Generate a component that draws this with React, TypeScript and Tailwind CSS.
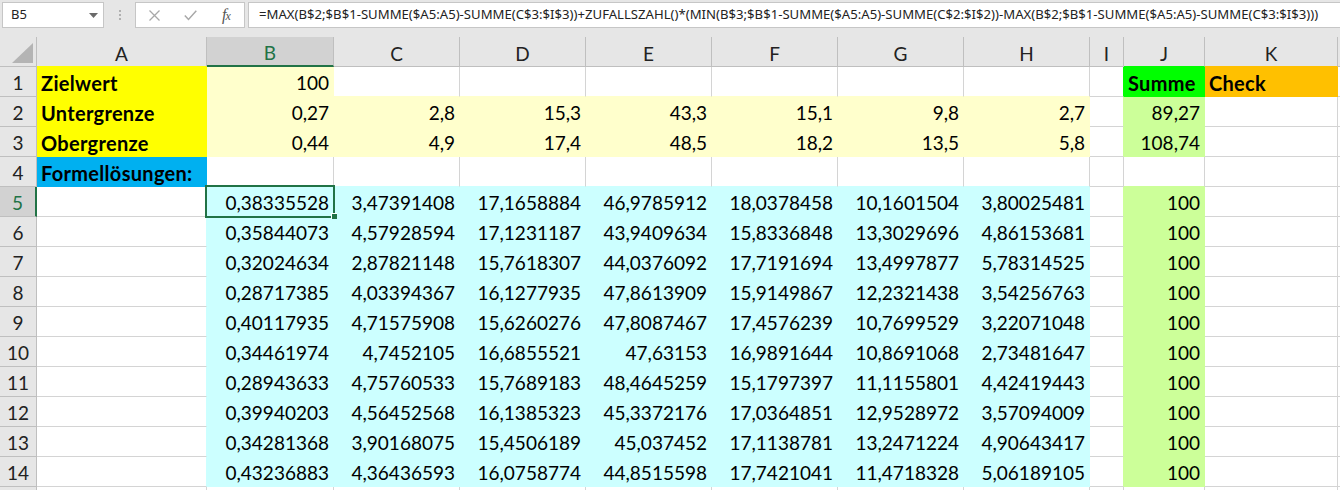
import React from 'react';

type Fill = '' | 'Y' | 'B' | 'LY' | 'C' | 'G' | 'O' | 'LG';

const BG: Record<Fill, string> = {
  '': 'bg-white',
  Y: 'bg-[#ffff00]',
  B: 'bg-[#00b0f0]',
  LY: 'bg-[#ffffcc]',
  C: 'bg-[#ccffff]',
  G: 'bg-[#00ff00]',
  O: 'bg-[#ffc000]',
  LG: 'bg-[#ccff99]',
};
const BR: Record<Fill, string> = {
  '': 'border-r-[#d4d4d4]',
  Y: 'border-r-[#ffff00]',
  B: 'border-r-[#00b0f0]',
  LY: 'border-r-[#ffffcc]',
  C: 'border-r-[#ccffff]',
  G: 'border-r-[#00ff00]',
  O: 'border-r-[#ffc000]',
  LG: 'border-r-[#ccff99]',
};
const BB: Record<Fill, string> = {
  '': 'border-b-[#d4d4d4]',
  Y: 'border-b-[#ffff00]',
  B: 'border-b-[#00b0f0]',
  LY: 'border-b-[#ffffcc]',
  C: 'border-b-[#ccffff]',
  G: 'border-b-[#00ff00]',
  O: 'border-b-[#ffc000]',
  LG: 'border-b-[#ccff99]',
};
const HB: Record<Fill, string> = {
  '': 'border-b-[#bfbfbf]',
  Y: 'border-b-[#ffff00]',
  B: 'border-b-[#00b0f0]',
  LY: 'border-b-[#ffffcc]',
  C: 'border-b-[#ccffff]',
  G: 'border-b-[#00ff00]',
  O: 'border-b-[#ffc000]',
  LG: 'border-b-[#ccff99]',
};

const COLS = ['A', 'B', 'C', 'D', 'E', 'F', 'G', 'H', 'I', 'J', 'K', 'L'];

const SOL: string[][] = [
  ['0,38335528', '3,47391408', '17,1658884', '46,9785912', '18,0378458', '10,1601504', '3,80025481'],
  ['0,35844073', '4,57928594', '17,1231187', '43,9409634', '15,8336848', '13,3029696', '4,86153681'],
  ['0,32024634', '2,87821148', '15,7618307', '44,0376092', '17,7191694', '13,4997877', '5,78314525'],
  ['0,28717385', '4,03394367', '16,1277935', '47,8613909', '15,9149867', '12,2321438', '3,54256763'],
  ['0,40117935', '4,71575908', '15,6260276', '47,8087467', '17,4576239', '10,7699529', '3,22071048'],
  ['0,34461974', '4,7452105', '16,6855521', '47,63153', '16,9891644', '10,8691068', '2,73481647'],
  ['0,28943633', '4,75760533', '15,7689183', '48,4645259', '15,1797397', '11,1155801', '4,42419443'],
  ['0,39940203', '4,56452568', '16,1385323', '45,3372176', '17,0364851', '12,9528972', '3,57094009'],
  ['0,34281368', '3,90168075', '15,4506189', '45,037452', '17,1138781', '13,2471224', '4,90643417'],
  ['0,43236883', '4,36436593', '16,0758774', '44,8515598', '17,7421041', '11,4718328', '5,06189105'],
];

function fillOf(r: number, c: number): Fill {
  if (r < 1 || r > 15 || c > 11) return '';
  if (c === 0) {
    if (r <= 3) return 'Y';
    if (r === 4) return 'B';
    return '';
  }
  if (c >= 1 && c <= 7) {
    if (c === 1 && r === 1) return 'LY';
    if (r === 2 || r === 3) return 'LY';
    if (r >= 5 && r <= 14) return 'C';
    return '';
  }
  if (c === 9) {
    if (r === 1) return 'G';
    if (r === 2 || r === 3 || (r >= 5 && r <= 14)) return 'LG';
    return '';
  }
  if (c === 10 && r === 1) return 'O';
  return '';
}

type Cell = { v: string; bold?: boolean; left?: boolean };

function cellOf(r: number, c: number): Cell {
  if (r === 1) {
    if (c === 0) return { v: 'Zielwert', bold: true, left: true };
    if (c === 1) return { v: '100' };
    if (c === 9) return { v: 'Summe', bold: true, left: true };
    if (c === 10) return { v: 'Check', bold: true, left: true };
  }
  if (r === 2) {
    const vals = ['Untergrenze', '0,27', '2,8', '15,3', '43,3', '15,1', '9,8', '2,7', '', '89,27'];
    if (c === 0) return { v: vals[0], bold: true, left: true };
    if (c < vals.length) return { v: vals[c] };
  }
  if (r === 3) {
    const vals = ['Obergrenze', '0,44', '4,9', '17,4', '48,5', '18,2', '13,5', '5,8', '', '108,74'];
    if (c === 0) return { v: vals[0], bold: true, left: true };
    if (c < vals.length) return { v: vals[c] };
  }
  if (r === 4 && c === 0) return { v: 'Formellösungen:', bold: true, left: true };
  if (r >= 5 && r <= 14) {
    if (c >= 1 && c <= 7) return { v: SOL[r - 5][c - 1] };
    if (c === 9) return { v: '100' };
  }
  return { v: '' };
}

const FORMULA =
  '=MAX(B$2;$B$1-SUMME($A5:A5)-SUMME(C$3:$I$3))+ZUFALLSZAHL()*(MIN(B$3;$B$1-SUMME($A5:A5)-SUMME(C$2:$I$2))-MAX(B$2;$B$1-SUMME($A5:A5)-SUMME(C$3:$I$3)))';

const ROWS = Array.from({ length: 15 }, (_, i) => i + 1);

export default function App() {
  return (
    <div className="w-[1340px] h-[490px] overflow-hidden bg-white text-black">
      {/* Formula bar */}
      <div className="h-[37px] bg-[#e6e6e6] flex items-start pt-[2px] font-['Noto_Sans',sans-serif]">
        <div className="ml-[2px] w-[102px] h-[26px] bg-white border border-[#c6c6c6] flex items-center pl-[8px] text-[13px] text-[#222] relative">
          <span>B5</span>
          <svg className="absolute left-[86px] top-[10px]" width="9" height="5" viewBox="0 0 9 5">
            <path d="M0 0 L9 0 L4.5 5 Z" fill="#6a6a6a" />
          </svg>
        </div>
        <div className="w-[31px] h-[26px] flex flex-col items-center justify-center gap-[2px]">
          <div className="w-[2px] h-[2px] bg-[#b0b0b0]" />
          <div className="w-[2px] h-[2px] bg-[#b0b0b0]" />
          <div className="w-[2px] h-[2px] bg-[#b0b0b0]" />
        </div>
        <div className="w-[110px] h-[26px] bg-white border border-[#c6c6c6] flex items-center">
          <div className="w-[36px] flex justify-center">
            <svg width="11" height="11" viewBox="0 0 11 11">
              <path d="M0.5 0.5 L10.5 10.5 M10.5 0.5 L0.5 10.5" stroke="#a8a8a8" strokeWidth="1.3" />
            </svg>
          </div>
          <div className="w-[36px] flex justify-center">
            <svg width="13" height="11" viewBox="0 0 13 11">
              <path d="M0.8 5.5 L4.5 9.5 L12.3 0.8" stroke="#a8a8a8" strokeWidth="1.5" fill="none" />
            </svg>
          </div>
          <div className="w-[36px] flex justify-center">
            <span className="font-['Liberation_Serif',serif] italic text-[16px] leading-none text-[#555] tracking-[-1px]">
              f<span className="text-[12px]">x</span>
            </span>
          </div>
        </div>
        <div className="ml-[3px] flex-1 h-[26px] bg-white border border-[#c6c6c6] border-r-0 flex items-center pl-[10px] text-[13.15px] text-[#222] whitespace-nowrap overflow-hidden">
          {FORMULA}
        </div>
      </div>

      {/* Grid */}
      <div className="grid grid-cols-[37px_170px_127px_126px_126px_126px_126px_126px_126px_34px_81px_133px_1fr] font-['Lato',sans-serif] text-[19px] leading-[22px]">
        {/* header row */}
        <div className="h-[30px] bg-[#e6e6e6] border-r border-b border-r-[#bfbfbf] border-b-[#bfbfbf] relative">
          <svg className="absolute left-[12px] top-[6px]" width="21" height="20" viewBox="0 0 21 20">
            <path d="M21 0 L21 20 L0 20 Z" fill="#b4b4b4" />
          </svg>
        </div>
        {COLS.map((col, c) => {
          const sel = c === 1;
          const f = fillOf(1, c);
          return (
            <div
              key={col}
              className={
                'h-[30px] border-r border-r-[#bfbfbf] flex items-end justify-center pb-[1px] ' +
                (sel
                  ? 'bg-[#d2d2d2] text-[#217346] border-b-2 border-b-[#217346]'
                  : 'bg-[#e6e6e6] text-[#222] border-b ' + HB[f])
              }
            >
              {c < 11 ? col : ''}
            </div>
          );
        })}

        {ROWS.map((r) => {
          const selRow = r === 5;
          return (
            <React.Fragment key={r}>
              <div
                className={
                  'h-[30px] border-b border-b-[#bfbfbf] flex items-end justify-center pb-[2px] ' +
                  (selRow
                    ? 'bg-[#d2d2d2] text-[#217346] border-r-2 border-r-[#217346]'
                    : 'bg-[#e6e6e6] text-[#222] border-r border-r-[#bfbfbf]')
                }
              >
                {r <= 14 ? r : ''}
              </div>
              {COLS.map((col, c) => {
                const f = fillOf(r, c);
                const rf = f || fillOf(r, c + 1);
                const bf = f || fillOf(r + 1, c);
                const cell = cellOf(r, c);
                const isSel = r === 5 && c === 1;
                return (
                  <div
                    key={col}
                    className={
                      'h-[30px] border-r border-b flex items-end pb-[2px] whitespace-nowrap ' +
                      BG[f] +
                      ' ' +
                      BR[rf] +
                      ' ' +
                      BB[bf] +
                      (cell.left ? ' justify-start pl-[4px]' : ' justify-end pr-[4px]') +
                      (cell.bold ? ' font-bold text-[20px] tracking-[0.3px]' : '') +
                      (isSel ? ' relative' : '')
                    }
                  >
                    {cell.v}
                    {isSel && (
                      <>
                        <div className="absolute left-[-2px] top-[-2px] w-[130px] h-[33px] border-2 border-[#217346] pointer-events-none" />
                        <div className="absolute left-[124px] top-[26px] w-[6px] h-[6px] bg-[#217346] border border-white border-r-0 border-b-0" />
                      </>
                    )}
                  </div>
                );
              })}
            </React.Fragment>
          );
        })}
      </div>
    </div>
  );
}
